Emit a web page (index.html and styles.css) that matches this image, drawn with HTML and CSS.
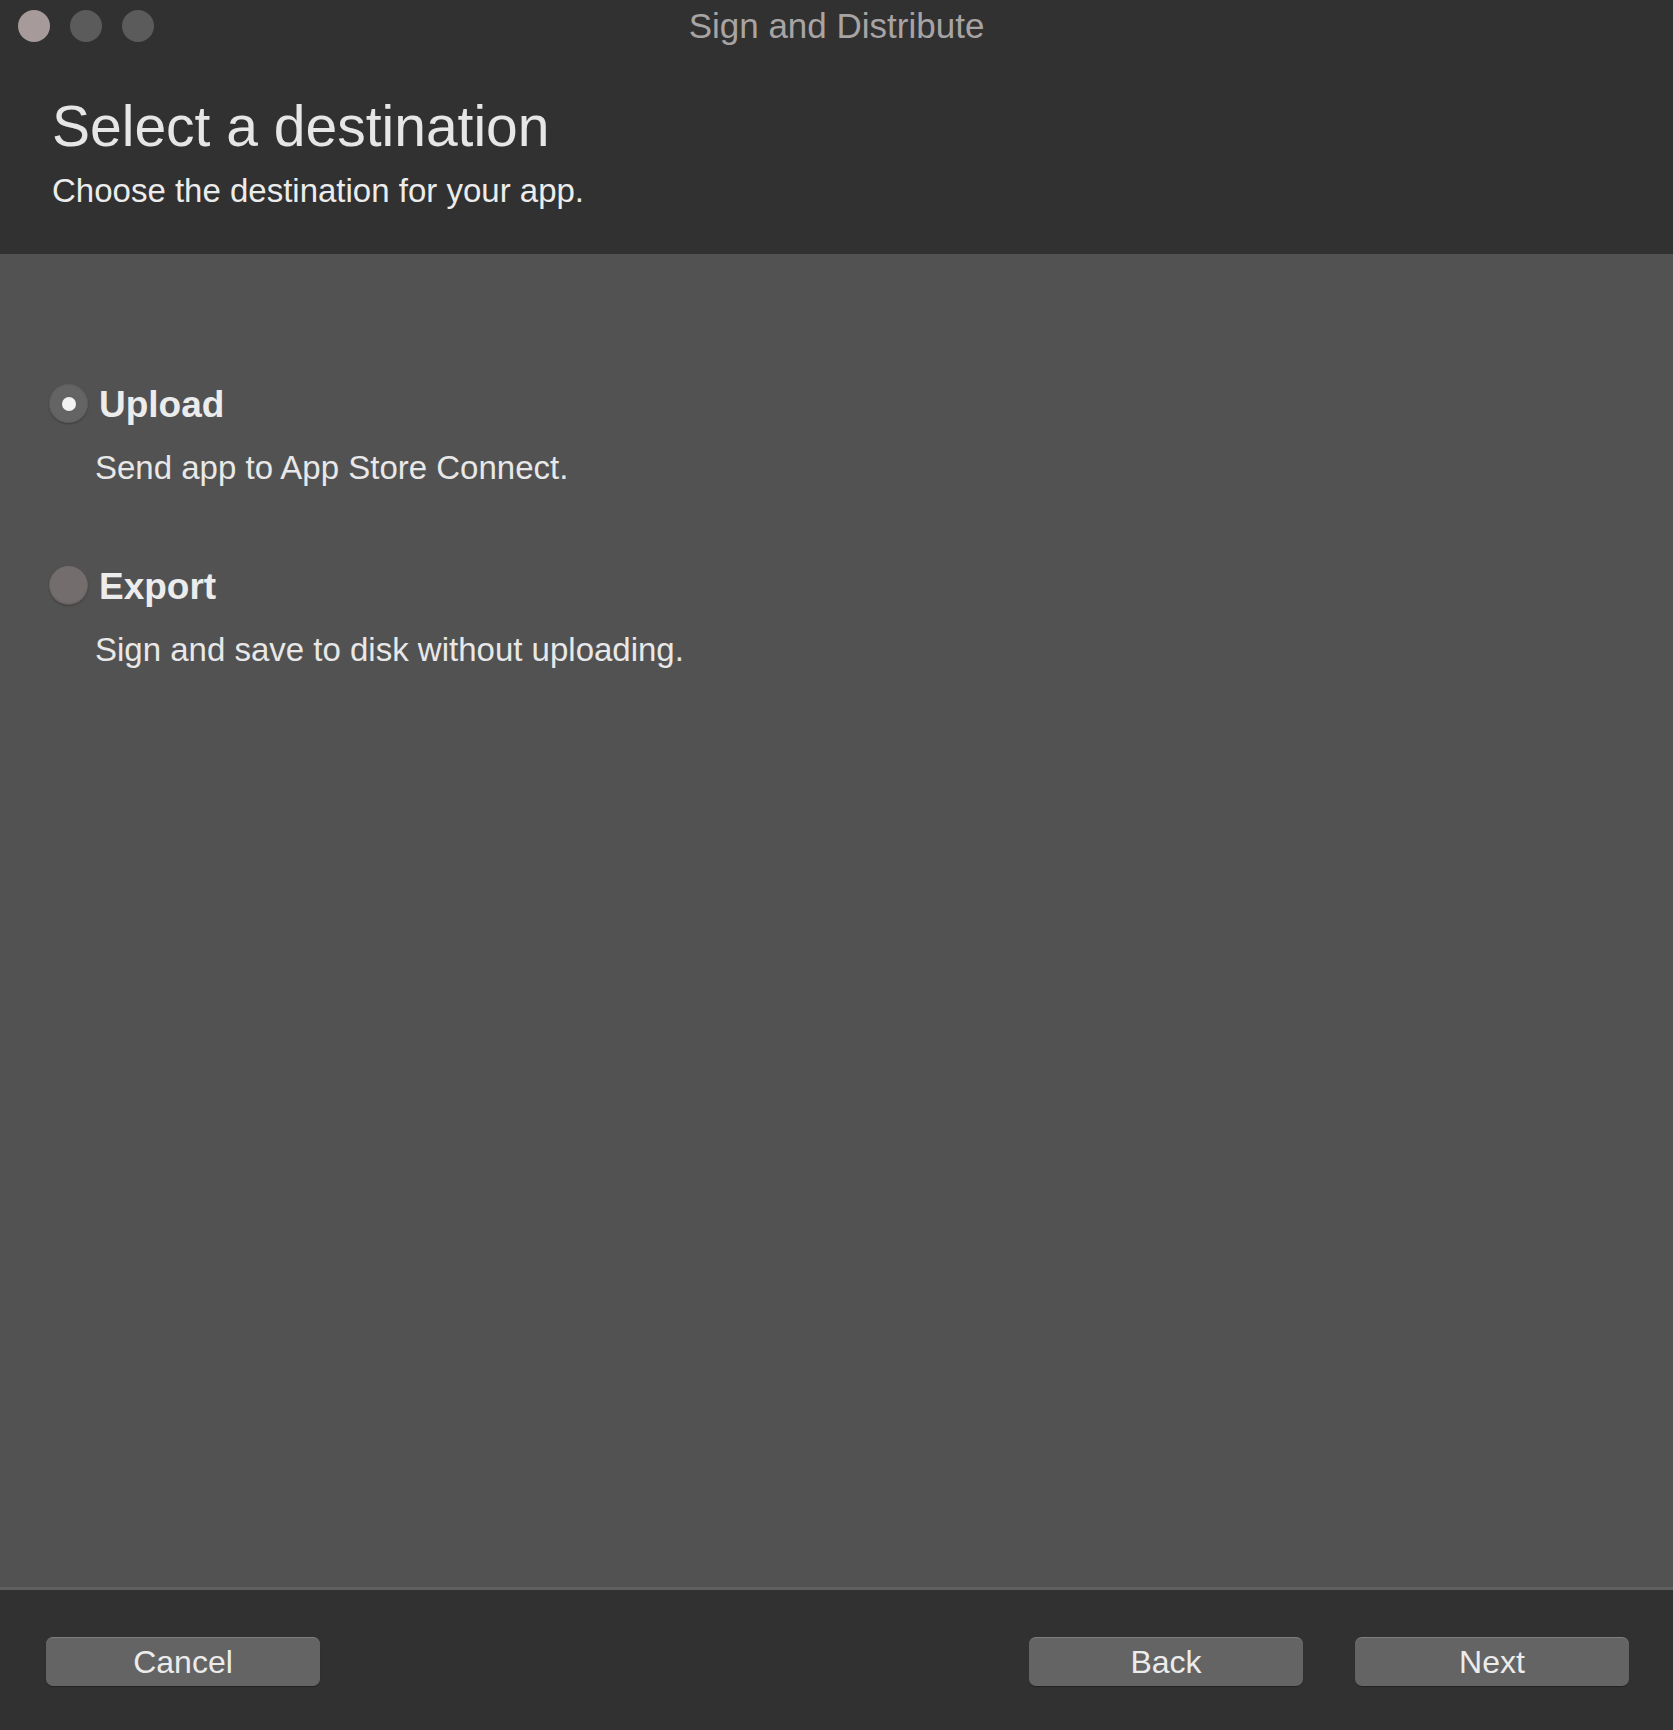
FILE: index.html
```html
<!DOCTYPE html>
<html lang="en">
<head>
<meta charset="utf-8">
<title>Sign and Distribute</title>
<link rel="stylesheet" href="styles.css">
</head>
<body>
<div class="window">
  <header class="header">
    <div class="titlebar">
      <div class="lights">
        <span class="light light-close"></span>
        <span class="light"></span>
        <span class="light"></span>
      </div>
      <div class="window-title">Sign and Distribute</div>
    </div>
    <h1 class="heading">Select a destination</h1>
    <p class="subheading">Choose the destination for your app.</p>
  </header>

  <main class="content">
    <div class="option">
      <div class="option-row">
        <span class="radio radio-on"><span class="radio-dot"></span></span>
        <span class="option-label">Upload</span>
      </div>
      <p class="option-desc">Send app to App Store Connect.</p>
    </div>
    <div class="option">
      <div class="option-row">
        <span class="radio radio-off"></span>
        <span class="option-label">Export</span>
      </div>
      <p class="option-desc">Sign and save to disk without uploading.</p>
    </div>
  </main>

  <footer class="footer">
    <button class="btn">Cancel</button>
    <div class="footer-right">
      <button class="btn">Back</button>
      <button class="btn">Next</button>
    </div>
  </footer>
</div>
</body>
</html>
```

FILE: styles.css
```css
* { box-sizing: border-box; }

html, body {
  margin: 0;
  padding: 0;
  background: #313131;
}

body {
  font-family: "Liberation Sans", Arial, sans-serif;
}

.window {
  width: 1673px;
  height: 1730px;
  display: flex;
  flex-direction: column;
  background: #313131;
}

/* ---------- header ---------- */
.header {
  background: #313131;
  height: 254px;
  flex: none;
  padding: 0 0 0 52px;
  position: relative;
}

.titlebar {
  height: 52px;
  display: flex;
  align-items: center;
  justify-content: center;
  margin-left: -52px;
  position: relative;
}

.lights {
  position: absolute;
  left: 18px;
  top: 10px;
  display: flex;
  gap: 20px;
}

.light {
  width: 32px;
  height: 32px;
  border-radius: 50%;
  background: #5b5b5b;
}

.light-close {
  background: #a69a9a;
}

.window-title {
  font-size: 35px;
  line-height: 40px;
  color: #a8a4a4;
}

.heading {
  margin: 41px 0 0 0;
  font-size: 57px;
  line-height: 66px;
  font-weight: normal;
  color: #e6e6e6;
}

.subheading {
  margin: 12px 0 0 0;
  font-size: 33px;
  line-height: 40px;
  color: #ececec;
}

/* ---------- content ---------- */
.content {
  flex: 1;
  background: #525252;
  padding: 129px 0 0 49px;
  border-bottom: 3px solid #5f5f5f;
}

.option + .option {
  margin-top: 77px;
}

.option-row {
  display: flex;
  align-items: center;
  height: 44px;
}

.radio {
  width: 39px;
  height: 39px;
  border-radius: 50%;
  flex: none;
  display: flex;
  align-items: center;
  justify-content: center;
  margin-top: -3px;
}

.radio-on {
  background: #646464;
  box-shadow: inset 0 0 0 1px #5c5c5c, 0 1px 2px rgba(0, 0, 0, 0.3);
}

.radio-dot {
  width: 14px;
  height: 14px;
  border-radius: 50%;
  background: #f2f2f2;
}

.radio-off {
  background: #736d6d;
  box-shadow: inset 0 -1px 2px rgba(0, 0, 0, 0.2), 0 1px 2px rgba(0, 0, 0, 0.25);
}

.option-label {
  margin-left: 11px;
  font-size: 37px;
  line-height: 44px;
  font-weight: bold;
  color: #ececec;
}

.option-desc {
  margin: 21px 0 0 46px;
  font-size: 33px;
  line-height: 40px;
  color: #e8e8e8;
}

/* ---------- footer ---------- */
.footer {
  height: 140px;
  flex: none;
  background: #313131;
  display: flex;
  justify-content: space-between;
  align-items: flex-start;
  padding: 47px 44px 0 46px;
}

.footer-right {
  display: flex;
  gap: 52px;
}

.btn {
  width: 274px;
  height: 49px;
  border: none;
  border-top: 1px solid #7e7e7e;
  border-radius: 7px;
  background: #646464;
  color: #ececec;
  font-family: "Liberation Sans", Arial, sans-serif;
  font-size: 32px;
  line-height: 46px;
  padding: 0;
  box-shadow: 0 1px 1px rgba(0, 0, 0, 0.3);
}
```
